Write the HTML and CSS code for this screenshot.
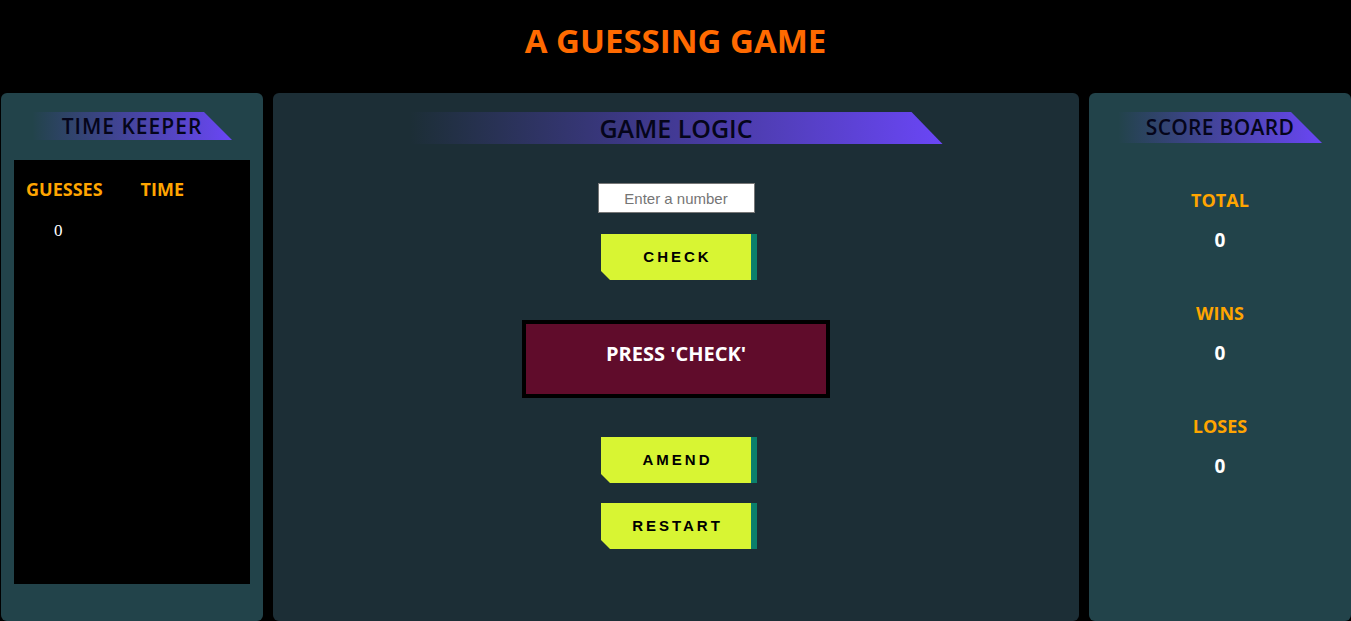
FILE: index.html
```html
<!DOCTYPE html>
<html lang="en">
<head>
<meta charset="utf-8">
<title>A Guessing Game</title>
<link rel="stylesheet" href="styles.css">
</head>
<body>
<header class="top">
  <h1 class="title">A GUESSING GAME</h1>
</header>
<main class="board">
  <section class="panel panel-side">
    <h2 class="banner banner-time">TIME KEEPER</h2>
    <div class="log">
      <div class="log-head">
        <span class="log-guess">GUESSES</span>
        <span>TIME</span>
      </div>
      <div class="log-row"><span>0</span></div>
    </div>
  </section>
  <section class="panel panel-main">
    <h2 class="banner banner-logic">GAME LOGIC</h2>
    <input class="guess-input" type="text" placeholder="Enter a number">
    <button class="btn btn-check">CHECK</button>
    <div class="message">PRESS 'CHECK'</div>
    <button class="btn btn-amend">AMEND</button>
    <button class="btn btn-restart">RESTART</button>
  </section>
  <section class="panel panel-side">
    <h2 class="banner banner-score">SCORE BOARD</h2>
    <div class="scores">
      <div class="score">
        <div class="score-label">TOTAL</div>
        <div class="score-value">0</div>
      </div>
      <div class="score">
        <div class="score-label">WINS</div>
        <div class="score-value">0</div>
      </div>
      <div class="score">
        <div class="score-label">LOSES</div>
        <div class="score-value">0</div>
      </div>
    </div>
  </section>
</main>
</body>
</html>
```
FILE: styles.css
```css
* { box-sizing: border-box; }

html, body {
  margin: 0;
  padding: 0;
  background: #000;
  overflow: hidden;
}

body {
  font-family: "Open Sans", "DejaVu Sans", sans-serif;
  height: 621px;
}

.top {
  height: 93px;
  padding-top: 18px;
}

.title {
  margin: 0;
  text-align: center;
  font-size: 33px;
  line-height: 45px;
  font-weight: 700;
  color: #ff6a00;
}

.board {
  display: grid;
  grid-template-columns: 262px 806px 262px;
  gap: 10px;
  margin-left: 1px;
  height: 528px;
}

.panel {
  border-radius: 6px;
  display: flex;
  flex-direction: column;
  align-items: center;
}

.panel-side { background: #22434a; }
.panel-main { background: #1c2e36; }

.banner {
  margin: 19px 0 0;
  font-weight: 600;
  color: #05051a;
  text-align: center;
  background: linear-gradient(90deg, rgba(106, 70, 246, 0) 0%, #6a46f6 100%);
}

.banner-time {
  width: 200px;
  height: 28px;
  line-height: 28px;
  font-size: 21px;
  letter-spacing: 1px;
  clip-path: polygon(0 0, calc(100% - 28px) 0, 100% 100%, 0 100%);
}

.banner-logic {
  width: 533px;
  height: 32px;
  line-height: 32px;
  font-size: 25px;
  letter-spacing: 0;
  clip-path: polygon(0 0, calc(100% - 31px) 0, 100% 100%, 0 100%);
}

.banner-score {
  width: 204px;
  height: 31px;
  line-height: 30px;
  font-size: 21px;
  letter-spacing: 0.3px;
  clip-path: polygon(0 0, calc(100% - 31px) 0, 100% 100%, 0 100%);
}

/* time keeper */
.log {
  align-self: stretch;
  margin: 20px 13px 0;
  height: 424px;
  background: #000;
  padding: 17px 0 0 12px;
}

.log-head {
  display: flex;
  font-size: 18px;
  line-height: 24px;
  font-weight: 700;
  color: #ffa500;
}

.log-guess { margin-right: 38px; }

.log-row {
  margin-top: 20px;
  padding-left: 28px;
  font-family: "Liberation Serif", serif;
  font-size: 17px;
  line-height: 20px;
  color: #fff;
}

/* game logic */
.guess-input {
  margin-top: 39px;
  width: 157px;
  height: 30px;
  border: 1px solid #767676;
  background: #fff;
  font-family: "Liberation Sans", Arial, sans-serif;
  font-size: 15px;
  text-align: center;
  padding: 0 4px;
}

.guess-input::placeholder { color: #757575; }

.btn {
  width: 156px;
  height: 46px;
  margin-left: 6px;
  padding: 0 0 2px 3px;
  border: none;
  border-right: 6px solid #0b7f6b;
  background: #d8f533;
  color: #000;
  font-family: "Liberation Sans", Arial, sans-serif;
  font-size: 15px;
  font-weight: 700;
  letter-spacing: 3px;
  clip-path: polygon(0 0, 100% 0, 100% 100%, 9px 100%, 0 calc(100% - 9px));
}

.btn-check { margin-top: 21px; }
.btn-amend { margin-top: 39px; }
.btn-restart { margin-top: 20px; }

.message {
  margin-top: 40px;
  width: 308px;
  height: 78px;
  border: 4px solid #000;
  background: #600c2b;
  color: #fff;
  font-size: 20px;
  font-weight: 700;
  line-height: 27px;
  text-align: center;
  padding-top: 16px;
}

/* score board */
.scores {
  margin-top: 45px;
  display: flex;
  flex-direction: column;
  align-items: center;
  gap: 48px;
}

.score {
  display: flex;
  flex-direction: column;
  align-items: center;
  gap: 15px;
}

.score-label {
  font-size: 18px;
  line-height: 24px;
  font-weight: 700;
  color: #ffa500;
}

.score-value {
  font-size: 19px;
  line-height: 26px;
  font-weight: 700;
  color: #fff;
}
```
